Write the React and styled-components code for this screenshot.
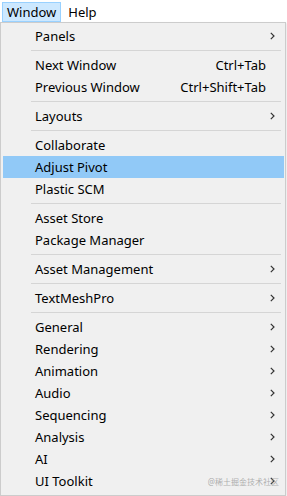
import React from 'react'
import styled, { createGlobalStyle } from 'styled-components'

const Global = createGlobalStyle`
  html, body {
    margin: 0;
    background: #fff;
  }
  body {
    font-family: "Noto Sans", "Noto Sans CJK SC", sans-serif;
    font-size: 13px;
    color: #000;
  }
`

const Page = styled.div`
  position: relative;
  width: 287px;
  height: 496px;
  overflow: hidden;
`

const MenuBar = styled.div`
  display: flex;
  height: 22px;
  padding: 2px 0 0 2px;
  box-sizing: border-box;
`

const MenuTitle = styled.div`
  display: flex;
  align-items: center;
  height: 20px;
  padding: 0 4px;
  box-sizing: border-box;
  border: 1px solid ${p => (p.$active ? '#99d1ff' : 'transparent')};
  background: ${p => (p.$active ? '#cce8ff' : 'transparent')};
  margin-right: 2px;
`

const Dropdown = styled.div`
  width: 286px;
  height: 474px;
  box-sizing: border-box;
  background: #f0f0f0;
  border: 1px solid #cccccc;
  padding: 2px 1px 2px 2px;
  box-shadow: 1px 1px 2px rgba(0, 0, 0, 0.1);
`

const Item = styled.div`
  display: grid;
  grid-template-columns: 1fr auto 18px;
  align-items: center;
  height: 22px;
  padding-left: 32px;
  background: ${p => (p.$hover ? '#91c9f7' : 'transparent')};
  white-space: nowrap;
`

const Shortcut = styled.span`
  grid-column: 2;
  text-align: right;
`

const Arrow = styled.svg`
  grid-column: 3;
  margin-left: 4px;
  width: 5px;
  height: 8px;
`

const Separator = styled.div`
  height: 7px;
  display: flex;
  align-items: center;
  margin: 0 3px 0 28px;
  &::after {
    content: '';
    flex: 1;
    border-top: 1px solid #d5d5d5;
  }
`

const Watermark = styled.div`
  position: absolute;
  right: 8px;
  bottom: 9px;
  font-size: 8px;
  color: rgba(150, 150, 150, 0.75);
`

const sections = [
  [{ label: 'Panels', sub: true }],
  [
    { label: 'Next Window', key: 'Ctrl+Tab' },
    { label: 'Previous Window', key: 'Ctrl+Shift+Tab' },
  ],
  [{ label: 'Layouts', sub: true }],
  [{ label: 'Collaborate' }, { label: 'Adjust Pivot', hover: true }, { label: 'Plastic SCM' }],
  [{ label: 'Asset Store' }, { label: 'Package Manager' }],
  [{ label: 'Asset Management', sub: true }],
  [{ label: 'TextMeshPro', sub: true }],
  [
    { label: 'General', sub: true },
    { label: 'Rendering', sub: true },
    { label: 'Animation', sub: true },
    { label: 'Audio', sub: true },
    { label: 'Sequencing', sub: true },
    { label: 'Analysis', sub: true },
    { label: 'AI', sub: true },
    { label: 'UI Toolkit', sub: true },
  ],
]

const Chevron = () =>
  <Arrow viewBox="0 0 5 8">
    <path d="M0.8 0.8 L4 4 L0.8 7.2" fill="none" stroke="#333" strokeWidth="1.2" />
  </Arrow>

const App = () =>
  <Page>
    <Global />
    <MenuBar>
      <MenuTitle $active>Window</MenuTitle>
      <MenuTitle>Help</MenuTitle>
    </MenuBar>
    <Dropdown>
      {sections.map((items, i) =>
        <React.Fragment key={i}>
          {i > 0 && <Separator />}
          {items.map(item =>
            <Item key={item.label} $hover={item.hover}>
              <span>{item.label}</span>
              {item.key && <Shortcut>{item.key}</Shortcut>}
              {item.sub && <Chevron />}
            </Item>
          )}
        </React.Fragment>
      )}
    </Dropdown>
    <Watermark>@稀土掘金技术社区</Watermark>
  </Page>

export default App
